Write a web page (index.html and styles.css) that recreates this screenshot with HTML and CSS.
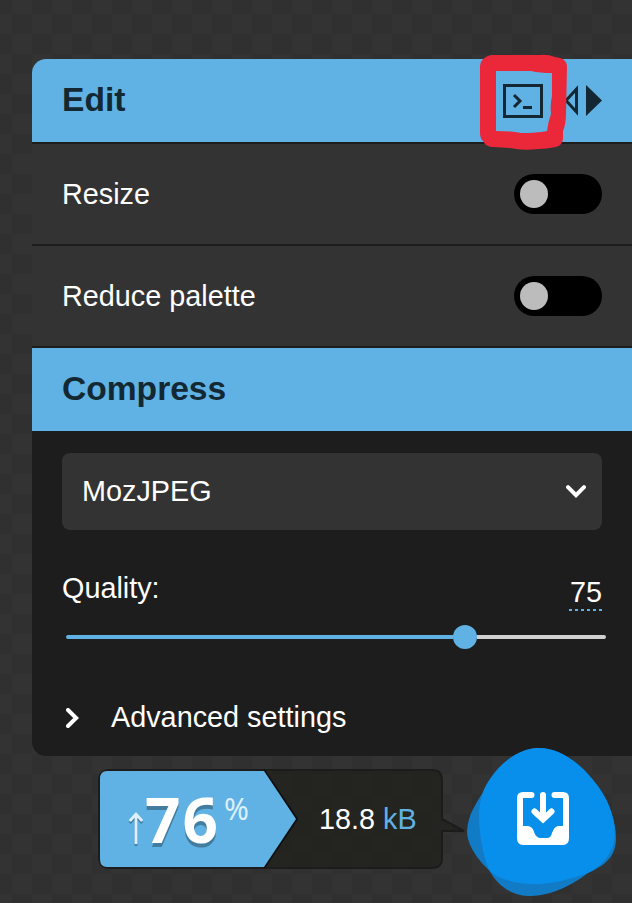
FILE: index.html
```
<!DOCTYPE html>
<html lang="en">
<head>
<meta charset="utf-8">
<title>Image options</title>
<link rel="stylesheet" href="styles.css">
</head>
<body>
<main class="panel">
  <header class="heading">
    <h3>Edit</h3>
    <div class="tools">
      <svg class="cli" width="40" height="34" viewBox="0 0 40 34"><path d="M1.5 1.5h37v31h-37z" fill="none" stroke="#132832" stroke-width="3"/><path d="M11 11l6 6-6 6" fill="none" stroke="#132832" stroke-width="3"/><path d="M20 22h9v3h-9z" fill="#132832"/></svg>
      <svg class="copy" width="38" height="32" viewBox="0 0 38 32"><path d="M12.5 4v23L2 15.5z" fill="none" stroke="#132832" stroke-width="3"/><path d="M22 0v31l16-15.5z" fill="#132832"/></svg>
      <svg class="marker" width="88" height="96" viewBox="0 0 88 96"><path fill="#eb2839" fill-rule="evenodd" d="M11 1H60Q68 0 75 3L80 4Q87 6 87 13L86 59Q86 70 83 77L83 84Q83 91 76 93Q66 95 58 95Q43 97 30 94L13 93Q6 93 3 87Q0 84 0 79V12Q0 4 11 1ZM16 17V77Q32 77 41 79Q57 79 67 77Q68 68 71 60Q70 51 72 42V19Q60 19 51 17Z"/></svg>
    </div>
  </header>
  <label class="row">Resize <span class="toggle"><i></i></span></label>
  <label class="row">Reduce palette <span class="toggle"><i></i></span></label>
  <header class="heading compress"><h3>Compress</h3></header>
  <section class="body">
    <div class="select"><span>MozJPEG</span>
      <svg width="20" height="13" viewBox="0 0 20 13"><path d="M2 2.2l8 8 8-8" fill="none" stroke="#fff" stroke-width="4" stroke-linecap="round"/></svg>
    </div>
    <div class="quality"><span>Quality:</span><span class="value">75</span></div>
    <div class="slider"><span class="fill"></span><span class="thumb"></span><span class="rest"></span></div>
    <div class="advanced">
      <svg width="13" height="20" viewBox="0 0 13 20"><path d="M2 2l8.2 8L2 18" fill="none" stroke="#fff" stroke-width="4" stroke-linecap="round"/></svg>
      <span>Advanced settings</span>
    </div>
  </section>
</main>
<footer class="results">
  <div class="bubble">
    <svg class="bubble-shape" width="370" height="100" viewBox="0 0 370 100">
      <path d="M12 1H334Q344 1 344 11V50L366 62H344V89Q344 99 334 99H12Q1 99 1 88V12Q1 1 12 1Z" fill="#20201c" fill-opacity=".8" stroke="#1c1c1c" stroke-width="2"/>
      <path d="M166 1l33 49-33 49" fill="none" stroke="#0c0c0c" stroke-width="2"/>
      <path d="M9 2H166l32 48-32 48H9Q2 98 2 90V10Q2 2 9 2Z" fill="#5fb2e3"/>
    </svg>
    <div class="percent">
      <svg class="arrow" width="16" height="36" viewBox="0 0 16 36"><path d="M8 33V3M1.8 10L8 3l6.2 7" fill="none" stroke="#dceffa" stroke-width="2.8"/></svg>
      <strong>76</strong><span class="sign">%</span>
    </div>
    <div class="size">18.8 <span>kB</span></div>
  </div>
  <svg class="download" width="149" height="150" viewBox="0 0 149 150">
    <path d="M71 1C94 0 119 20 134 44C142 59 149 74 149 91C149 109 139 118 121 126C97 144 78 149 61 149C42 148 30 137 22 123C11 113 0 98 0 84C1 67 9 57 16 45C25 23 47 2 71 1Z" fill="#127bc5"/>
    <path d="M71 1C91 1 110 13 126 33C141 50 148 70 148 87C147 104 138 117 121 126C101 133 82 138 63 137C44 136 30 131 22 123C15 106 12 84 12 68C12 58 14 51 17 43C27 22 47 2 71 1Z" fill="#078feb"/>
    <g transform="translate(50 45)"><path d="M14.5 3H6Q3 3 3 6V46Q3 50 6 50H46Q49 50 49 46V6Q49 3 46 3H37.5" fill="none" stroke="#fff" stroke-width="6" stroke-linecap="round"/><path d="M3 34H11Q16 35 17 40Q19 46 24 46H30Q34 46 35 41Q37 35 41 34H49V51H3Z" fill="#fff"/><path d="M26 3V27M17.5 19.5l8.5 8 8.5-8" fill="none" stroke="#fff" stroke-width="6" stroke-linecap="round"/></g>
  </svg>
</footer>
</body>
</html>
```
FILE: styles.css
```
* { box-sizing: border-box; }
body {
  margin: 0;
  height: 903px;
  overflow: hidden;
  padding: 59px 0 0 32px;
  color: #fff;
  font: 28.8px/34px "Liberation Sans", Arial, sans-serif;
  background: conic-gradient(#333 25%, #303030 0 50%, #333 0 75%, #303030 0) 12px 14px / 40px 40px;
}
svg { display: block; flex: none; }
.panel {
  height: 697px;
  background: #1d1d1d;
  border-radius: 14px 0 0 14px;
}
.heading {
  height: 83px;
  padding: 0 30px;
  display: flex;
  align-items: center;
  justify-content: space-between;
  background: #5fb2e3;
  color: #132832;
  border-top-left-radius: 14px;
}
.heading.compress { margin-top: 2px; border-radius: 0; }
h3 { margin: 0; padding-bottom: 2px; font-size: 33.6px; line-height: 40px; }
.tools { position: relative; display: flex; align-items: center; gap: 21px; }
.marker { position: absolute; left: -23px; top: -30px; }
.row {
  height: 100px;
  margin-top: 2px;
  padding: 0 30px;
  display: flex;
  align-items: center;
  justify-content: space-between;
  background: #333;
}
.toggle { width: 88px; height: 40px; padding: 6px; border-radius: 20px; background: #000; }
.toggle i { display: block; width: 28px; height: 28px; border-radius: 50%; background: #bcbcbc; }
.body { padding: 22px 30px 0; }
.select {
  height: 77px;
  padding: 0 16px 0 20px;
  border-radius: 8px;
  background: #333;
  display: flex;
  align-items: center;
  justify-content: space-between;
}
.select span, .advanced span { padding-bottom: 2px; }
.quality { display: flex; justify-content: space-between; margin-top: 41px; height: 43px; }
.value {
  width: 33px;
  height: 36px;
  margin-top: 4px;
  text-align: right;
  background: repeating-linear-gradient(90deg, #5fb2e3 0 3px, transparent 0 6px) left bottom / 100% 2px no-repeat;
}
.slider { height: 24px; margin: 11px -4px 0 4px; display: flex; align-items: center; }
.fill { width: 387px; height: 4px; border-radius: 2px 0 0 2px; background: #5fb2e3; }
.thumb { width: 24px; height: 24px; border-radius: 50%; background: #5fb2e3; }
.rest { flex: 1; height: 4px; border-radius: 0 2px 2px 0; background: #d0d0d0; }
.advanced { display: flex; align-items: center; gap: 32px; margin-top: 51px; padding-left: 4px; }
.results { display: flex; height: 147px; padding-left: 66px; }
.bubble { position: relative; width: 370px; height: 100px; margin-top: 13px; display: flex; }
.bubble-shape { position: absolute; left: 0; top: 0; }
.percent { position: relative; width: 198px; height: 100px; display: flex; padding-left: 30px; }
.arrow { margin-top: 42px; filter: drop-shadow(0 2px 0 #427d9f); }
.percent strong {
  font: bold 62px/84px "Noto Sans", sans-serif;
  letter-spacing: 2px;
  text-shadow: 0 4px 0 #427d9f;
  margin: 8px 0 0 1px;
}
.sign { font: 30px/34px "Noto Sans", sans-serif; color: #dceffa; margin: 23px 0 0 4px; }
.size { position: relative; margin: 33px 0 0 23px; white-space: nowrap; }
.size span { color: #5fb2e3; }
.download { position: relative; margin: -9px 0 0 -1px; }
```
